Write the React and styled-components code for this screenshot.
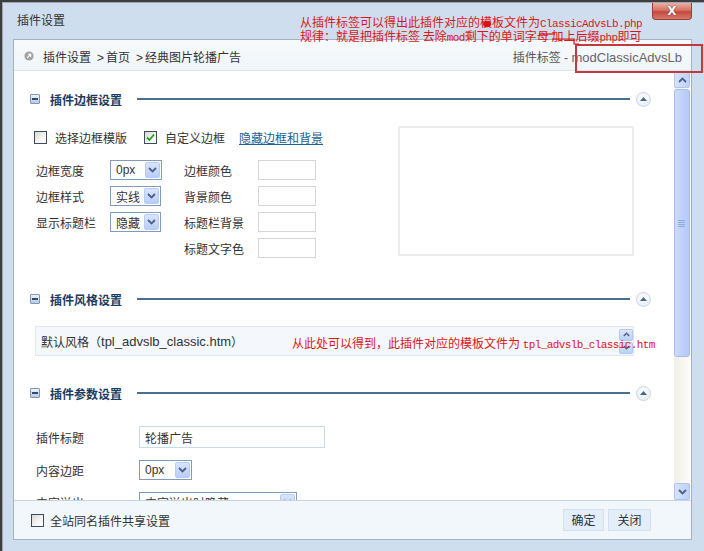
import React from 'react';
import styled, { createGlobalStyle } from 'styled-components';

const GlobalStyle = createGlobalStyle`
  html, body { margin: 0; padding: 0; }
  body {
    background: #3e3e3e;
    width: 704px;
    height: 551px;
    overflow: hidden;
    font-family: "Liberation Sans", "Noto Sans CJK SC", sans-serif;
    font-size: 12px;
    color: #333;
  }
`;

const Dialog = styled.div`
  position: relative;
  box-sizing: border-box;
  margin: 2px 0 0 2px;
  width: 702px;
  height: 549px;
  background: #cfdeee;
  border-top: 1px solid #9aa6b2;
  border-left: 1px solid #9aa6b2;
  display: flex;
  flex-direction: column;
`;

const TitleBar = styled.div`
  height: 36px;
  flex: none;
  display: flex;
  align-items: flex-start;
  padding-left: 14px;
`;

const TitleText = styled.div`
  line-height: 37px;
  font-size: 12px;
  color: #333;
`;

const CloseButton = styled.div`
  margin-left: auto;
  margin-right: 12px;
  width: 40px;
  height: 17px;
  box-sizing: border-box;
  border: 1px solid #9b3e36;
  border-top: none;
  border-radius: 0 0 4px 4px;
  background: linear-gradient(#eab0a6 0%, #d67366 45%, #c4473b 55%, #d77b6d 100%);
  display: flex;
  align-items: center;
  justify-content: center;
  color: #fff;
  font-family: "DejaVu Sans", sans-serif;
  font-weight: bold;
  font-size: 12px;
  text-shadow: 0 0 1px #6a2a24, 0 0 1px #6a2a24;
`;

const Panel = styled.div`
  box-sizing: border-box;
  margin-left: 10px;
  width: 679px;
  height: 501px;
  flex: none;
  border: 1px solid #a3b2c2;
  display: flex;
  flex-direction: column;
  background: #fff;
`;

const Breadcrumb = styled.div`
  flex: none;
  height: 28px;
  border-bottom: 1px solid #d9e4ee;
  background: linear-gradient(#f7fafc, #f0f5f9);
  display: flex;
  align-items: center;
  padding: 2px 9px 0 10px;
`;

const CrumbIcon = styled.svg`
  width: 10px;
  height: 10px;
  margin-right: 9px;
  flex: none;
`;

const CrumbText = styled.div`
  color: #333;
  font-size: 12px;
`;

const Sep = styled.span`
  margin: 0 2px 0 6px;
`;

const TagText = styled.div`
  margin-left: auto;
  color: #555;
  font-size: 12px;
`;

const TagName = styled.span`
  font-size: 13px;
  color: #666;
`;

const Body = styled.div`
  flex: 1;
  display: flex;
  min-height: 0;
  padding-right: 1px;
`;

const Content = styled.div`
  flex: 1;
  overflow: hidden;
  background: #fff;
  padding: 20px 23px 0 16px;
`;

const Scrollbar = styled.div`
  width: 16px;
  flex: none;
  display: flex;
  flex-direction: column;
  background: linear-gradient(90deg, #f1efe6, #fcfcf9);
`;

const ScrollBtn = styled.div`
  box-sizing: border-box;
  width: 16px;
  height: 17px;
  flex: none;
  border: 1px solid #b1c4ef;
  border-radius: 2px;
  background: linear-gradient(90deg, #d6e2fe, #bfd1fb);
  display: flex;
  align-items: center;
  justify-content: center;
`;

const Thumb = styled.div`
  box-sizing: border-box;
  width: 16px;
  height: 268px;
  flex: none;
  margin-top: 1px;
  border: 1px solid #a9bdec;
  border-radius: 3px;
  background: linear-gradient(90deg, #cfdcfd, #bccffb 60%, #b6cafa);
  display: flex;
  align-items: center;
  justify-content: center;
`;

const Track = styled.div`
  flex: 1;
`;

const Grip = styled.svg`
  width: 8px;
  height: 8px;
`;

const Section = styled.div`
  margin-top: ${p => p.$mt || 0}px;
`;

const SectionHeader = styled.div`
  height: 16px;
  display: flex;
  align-items: center;
`;

const MinusIcon = styled.span`
  box-sizing: border-box;
  width: 10px;
  height: 10px;
  flex: none;
  margin-right: 10px;
  border: 1px solid #8196b4;
  border-radius: 1px;
  background: linear-gradient(#eef3f9, #b9c9de);
  display: flex;
  align-items: center;
  justify-content: center;
  &::after {
    content: "";
    width: 6px;
    height: 2px;
    background: #2e4c76;
  }
`;

const SectionTitle = styled.div`
  font-weight: bold;
  color: #1d3b5d;
  margin-right: 15px;
  font-size: 12px;
`;

const Rule = styled.div`
  flex: 1;
  height: 2px;
  background: #4a6d92;
`;

const Collapse = styled.div`
  box-sizing: border-box;
  width: 15px;
  height: 15px;
  margin-left: 6px;
  flex: none;
  border-radius: 50%;
  border: 1px solid #c9d5e2;
  background: radial-gradient(circle at 50% 35%, #ffffff, #e3eaf2);
  display: flex;
  align-items: center;
  justify-content: center;
`;

const FrameBody = styled.div`
  margin-top: 19px;
  padding: 0 17px 0 4px;
  display: flex;
  justify-content: space-between;
`;

const LeftCol = styled.div`
  display: flex;
  flex-direction: column;
`;

const CheckRow = styled.div`
  height: 22px;
  display: flex;
  align-items: center;
`;

const CheckLabel = styled.label`
  display: flex;
  align-items: center;
  gap: ${p => p.$gap || 8}px;
  margin-right: ${p => p.$mr || 0}px;
  color: #333;
`;

const Box = styled.span`
  box-sizing: border-box;
  width: 13px;
  height: 13px;
  flex: none;
  border: 1px solid #3e4e60;
  background: linear-gradient(135deg, #d9d9d2, #f6f6f3 60%, #ffffff);
  display: flex;
  align-items: center;
  justify-content: center;
`;

const Link = styled.a`
  color: #225e91;
  text-decoration: underline;
  cursor: pointer;
`;

const FormGrid = styled.div`
  margin-top: 12px;
  padding-left: 2px;
  display: grid;
  grid-template-columns: 74px 74px 74px 58px;
  row-gap: 6px;
  grid-auto-rows: 20px;
  align-items: center;
  justify-items: start;
`;

const FieldLabel = styled.div`
  color: #333;
  white-space: nowrap;
`;

const SelectBox = styled.div`
  box-sizing: border-box;
  width: ${p => p.$w}px;
  height: 20px;
  border: 1px solid #7f9db9;
  background: #fff;
  display: flex;
  align-items: center;
  padding-left: 5px;
  color: #333;
  font-size: 12px;
`;

const DropBtn = styled.span`
  box-sizing: border-box;
  margin-left: auto;
  margin-right: 1px;
  width: 15px;
  height: 16px;
  flex: none;
  border: 1px solid #b9cbf3;
  border-radius: 2px;
  background: linear-gradient(#d9e4fe, #b9cdfa);
  display: flex;
  align-items: center;
  justify-content: center;
`;

const ColorInput = styled.div`
  box-sizing: border-box;
  width: 58px;
  height: 20px;
  border: 1px solid #d6d6d6;
  background: #fff;
`;

const Preview = styled.div`
  box-sizing: border-box;
  width: 236px;
  height: 130px;
  border: 2px solid #ececec;
  background: #fff;
`;

const StyleBox = styled.div`
  box-sizing: border-box;
  margin: 19px 17px 0 5px;
  height: 30px;
  border: 1px solid #dfe7ef;
  background: #f4f8fc;
  display: flex;
  align-items: center;
  padding-left: 5px;
  color: #333;
`;

const Latin = styled.span`
  font-size: 13px;
`;

const Spinner = styled.div`
  margin-left: auto;
  display: flex;
  flex-direction: column;
  gap: 1px;
`;

const SpinBtn = styled.span`
  box-sizing: border-box;
  width: 14px;
  height: 12px;
  border: 1px solid #b5c7f0;
  border-radius: 2px;
  background: linear-gradient(#dbe6fe, #bccffa);
  display: flex;
  align-items: center;
  justify-content: center;
`;

const ParamGrid = styled.div`
  margin-top: 25px;
  padding-left: 6px;
  display: grid;
  grid-template-columns: 103px auto;
  grid-template-rows: 22px 20px 20px;
  row-gap: 12px;
  align-items: center;
  justify-items: start;
`;

const TextInput = styled.div`
  box-sizing: border-box;
  width: 186px;
  height: 22px;
  border: 1px solid #c9dbe8;
  background: #fff;
  display: flex;
  align-items: center;
  padding-left: 5px;
  color: #333;
`;

const Footer = styled.div`
  flex: none;
  height: 38px;
  border-top: 1px solid #c7d5e3;
  background: #f2f7fb;
  display: flex;
  align-items: center;
  padding: 0 40px 0 17px;
`;

const Buttons = styled.div`
  margin-left: auto;
  display: flex;
  gap: 4px;
  margin-bottom: 1px;
`;

const Button = styled.div`
  box-sizing: border-box;
  width: ${p => p.$w}px;
  height: 22px;
  border: 1px solid #d2e0ee;
  background: #e3eefa;
  display: flex;
  align-items: center;
  justify-content: center;
  color: #333;
`;

const Note = styled.div`
  position: absolute;
  left: ${p => p.$x}px;
  top: ${p => p.$y}px;
  color: #dc1616;
  font-size: 12px;
  line-height: ${p => p.$lh || 12}px;
  white-space: nowrap;
  font-family: "Noto Sans CJK SC", sans-serif;
`;

const Mono = styled.span`
  font-family: "Liberation Mono", monospace;
  font-size: 11px;
  letter-spacing: -0.6px;
`;

const RedFrame = styled.div`
  position: absolute;
  left: 572px;
  top: 41px;
  width: 128px;
  height: 29px;
  box-sizing: border-box;
  border: 2px solid #c13a40;
`;

const Scribble = styled.svg`
  position: absolute;
  left: 0;
  top: 0;
  width: 702px;
  height: 60px;
  pointer-events: none;
`;

const Chevron = ({ up, color = '#4d6185', w = 9, h = 6 }) => (
  <svg width={w} height={h} viewBox="0 0 9 6">
    <polyline
      points={up ? '1,5 4.5,1.5 8,5' : '1,1 4.5,4.5 8,1'}
      fill="none"
      stroke={color}
      strokeWidth="1.8"
    />
  </svg>
);

const Select = ({ w, children }) => (
  <SelectBox $w={w}>
    {children}
    <DropBtn><Chevron /></DropBtn>
  </SelectBox>
);

const Check = ({ checked }) => (
  <Box>
    {checked && (
      <svg width="9" height="9" viewBox="0 0 9 9">
        <polyline points="1,4.5 3.5,7 8,1.5" fill="none" stroke="#21a121" strokeWidth="1.8" />
      </svg>
    )}
  </Box>
);

const Header = ({ children }) => (
  <SectionHeader>
    <MinusIcon />
    <SectionTitle>{children}</SectionTitle>
    <Rule />
    <Collapse>
      <svg width="7" height="4" viewBox="0 0 7 4">
        <polygon points="0,4 3.5,0 7,4" fill="#3f6893" />
      </svg>
    </Collapse>
  </SectionHeader>
);

export default function App() {
  return (
    <>
      <GlobalStyle />
      <Dialog>
        <TitleBar>
          <TitleText>插件设置</TitleText>
          <CloseButton>X</CloseButton>
        </TitleBar>
        <Panel>
          <Breadcrumb>
            <CrumbIcon viewBox="0 0 10 10">
              <circle cx="5" cy="5" r="4.6" fill="#a3a3a3" />
              <path d="M3.2 6.8 L6.6 3.4 M4 3.3 H6.7 V6" stroke="#fff" strokeWidth="1.1" fill="none" />
            </CrumbIcon>
            <CrumbText>
              插件设置<Sep>&gt;</Sep>首页<Sep>&gt;</Sep>经典图片轮播广告
            </CrumbText>
            <TagText>
              插件标签 - <TagName>modClassicAdvsLb</TagName>
            </TagText>
          </Breadcrumb>
          <Body>
            <Content>
              <Section>
                <Header>插件边框设置</Header>
                <FrameBody>
                  <LeftCol>
                    <CheckRow>
                      <CheckLabel $mr={17}><Check />选择边框模版</CheckLabel>
                      <CheckLabel $mr={14}><Check checked />自定义边框</CheckLabel>
                      <Link>隐藏边框和背景</Link>
                    </CheckRow>
                    <FormGrid>
                      <FieldLabel>边框宽度</FieldLabel>
                      <Select w={52}>0px</Select>
                      <FieldLabel>边框颜色</FieldLabel>
                      <ColorInput />
                      <FieldLabel>边框样式</FieldLabel>
                      <Select w={51}>实线</Select>
                      <FieldLabel>背景颜色</FieldLabel>
                      <ColorInput />
                      <FieldLabel>显示标题栏</FieldLabel>
                      <Select w={51}>隐藏</Select>
                      <FieldLabel>标题栏背景</FieldLabel>
                      <ColorInput />
                      <span />
                      <span />
                      <FieldLabel>标题文字色</FieldLabel>
                      <ColorInput />
                    </FormGrid>
                  </LeftCol>
                  <Preview />
                </FrameBody>
              </Section>
              <Section $mt={33}>
                <Header>插件风格设置</Header>
                <StyleBox>
                  默认风格（<Latin>tpl_advslb_classic.htm</Latin>）
                  <Spinner>
                    <SpinBtn><Chevron up w={7} h={5} /></SpinBtn>
                    <SpinBtn><Chevron w={7} h={5} /></SpinBtn>
                  </Spinner>
                </StyleBox>
              </Section>
              <Section $mt={29}>
                <Header>插件参数设置</Header>
                <ParamGrid>
                  <FieldLabel>插件标题</FieldLabel>
                  <TextInput>轮播广告</TextInput>
                  <FieldLabel>内容边距</FieldLabel>
                  <Select w={53}>0px</Select>
                  <FieldLabel>内容溢出</FieldLabel>
                  <Select w={158}>内容溢出时隐藏</Select>
                </ParamGrid>
              </Section>
            </Content>
            <Scrollbar>
              <ScrollBtn><Chevron up /></ScrollBtn>
              <Thumb>
                <Grip viewBox="0 0 8 8">
                  <path d="M0 1.5H7M0 3.5H7M0 5.5H7M0 7.5H7" stroke="#8ea8e4" strokeWidth="1" />
                </Grip>
              </Thumb>
              <Track />
              <ScrollBtn><Chevron /></ScrollBtn>
            </Scrollbar>
          </Body>
          <Footer>
            <CheckLabel $gap={6}><Check />全站同名插件共享设置</CheckLabel>
            <Buttons>
              <Button $w={41}>确定</Button>
              <Button $w={43}>关闭</Button>
            </Buttons>
          </Footer>
        </Panel>

        <Note $x={297} $y={13}>
          从插件标签可以得出此插件对应的模板文件为<Mono>ClassicAdvsLb.php</Mono>
          <br />
          规律：就是把插件标签 去除<Mono>mod</Mono>剩下的单词字母 加上后缀<Mono>php</Mono>即可
        </Note>
        <RedFrame />
        <Scribble viewBox="0 0 702 60">
          <ellipse cx="484" cy="21" rx="4" ry="3.2" fill="#e01010" />
          <path d="M536 31 H552" stroke="#e01010" strokeWidth="1.3" fill="none" />
          <path d="M549 36 H571 V41 H576" stroke="#e01010" strokeWidth="1.2" fill="none" />
        </Scribble>
        <Note $x={289} $y={333} $lh={14}>
          从此处可以得到，此插件对应的模板文件为 <Mono>tpl_advslb_classic.htm</Mono>
        </Note>
      </Dialog>
    </>
  );
}
